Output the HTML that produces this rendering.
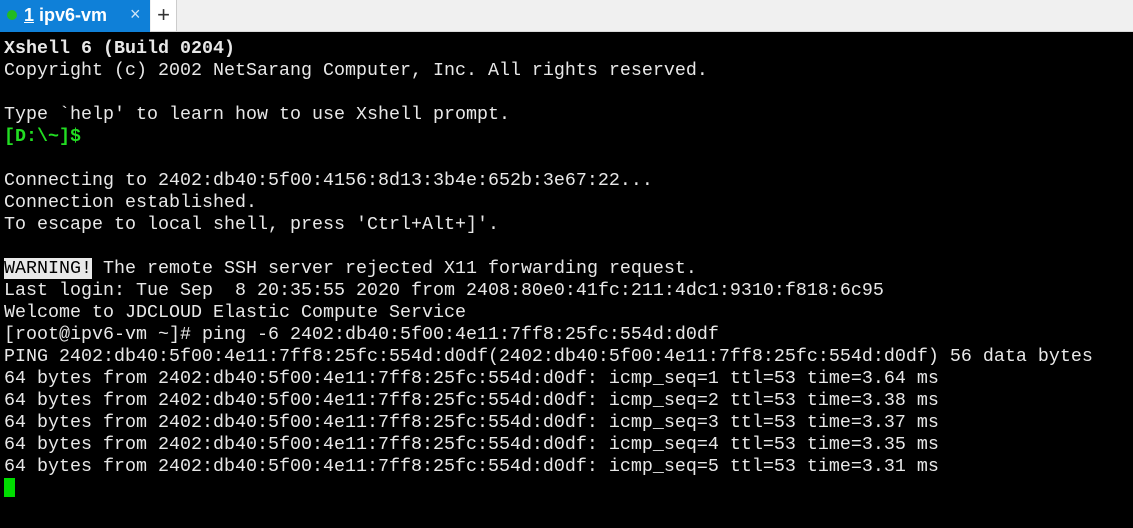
<!DOCTYPE html>
<html><head><style>
body{margin:0;width:1133px;height:528px;background:#000;overflow:hidden;}
.bar{position:absolute;left:0;top:0;width:1133px;height:32px;background:#f0f0f0;border-bottom:1px solid #d8d8d8;box-sizing:border-box}
.tab{position:absolute;left:0;top:0;width:150px;height:32px;background:#0f80d8;color:#fff;font:bold 18px "Liberation Sans",sans-serif}
.dot{position:absolute;left:7px;top:10px;width:10px;height:10px;border-radius:50%;background:#22bb22}
.plus{position:absolute;left:151px;top:0;width:25px;height:31px;background:#fff;border-right:1px solid #ccc;color:#333;font:22px "Liberation Sans",sans-serif;text-align:center;line-height:30px}
pre{position:absolute;left:4px;top:38px;margin:0;font:18.33px/22px "Liberation Mono",monospace;color:#e8e8e8}
.b{font-weight:bold}.g{color:#22dd22;font-weight:bold}
.w{background:#e8e8e8;color:#000}
.cur{position:absolute;left:4px;top:478px;width:11px;height:19px;background:#00dd00}
</style></head><body>
<div class="bar"><div class="tab"><div class="dot"></div><span style="position:absolute;left:24px;top:5px"><u>1</u> ipv6-vm</span><span style="position:absolute;left:130px;top:4px;font-weight:normal;color:#cfe4f6;font-size:18px">×</span></div><div class="plus">+</div></div>
<pre><span class="b">Xshell 6 (Build 0204)</span>
Copyright (c) 2002 NetSarang Computer, Inc. All rights reserved.

Type `help' to learn how to use Xshell prompt.
<span class="g">[D:\~]$</span> 

Connecting to 2402:db40:5f00:4156:8d13:3b4e:652b:3e67:22...
Connection established.
To escape to local shell, press 'Ctrl+Alt+]'.

<span class="w">WARNING!</span> The remote SSH server rejected X11 forwarding request.
Last login: Tue Sep  8 20:35:55 2020 from 2408:80e0:41fc:211:4dc1:9310:f818:6c95
Welcome to JDCLOUD Elastic Compute Service
[root@ipv6-vm ~]# ping -6 2402:db40:5f00:4e11:7ff8:25fc:554d:d0df
PING 2402:db40:5f00:4e11:7ff8:25fc:554d:d0df(2402:db40:5f00:4e11:7ff8:25fc:554d:d0df) 56 data bytes
64 bytes from 2402:db40:5f00:4e11:7ff8:25fc:554d:d0df: icmp_seq=1 ttl=53 time=3.64 ms
64 bytes from 2402:db40:5f00:4e11:7ff8:25fc:554d:d0df: icmp_seq=2 ttl=53 time=3.38 ms
64 bytes from 2402:db40:5f00:4e11:7ff8:25fc:554d:d0df: icmp_seq=3 ttl=53 time=3.37 ms
64 bytes from 2402:db40:5f00:4e11:7ff8:25fc:554d:d0df: icmp_seq=4 ttl=53 time=3.35 ms
64 bytes from 2402:db40:5f00:4e11:7ff8:25fc:554d:d0df: icmp_seq=5 ttl=53 time=3.31 ms</pre>
<div class="cur"></div>
</body></html>
